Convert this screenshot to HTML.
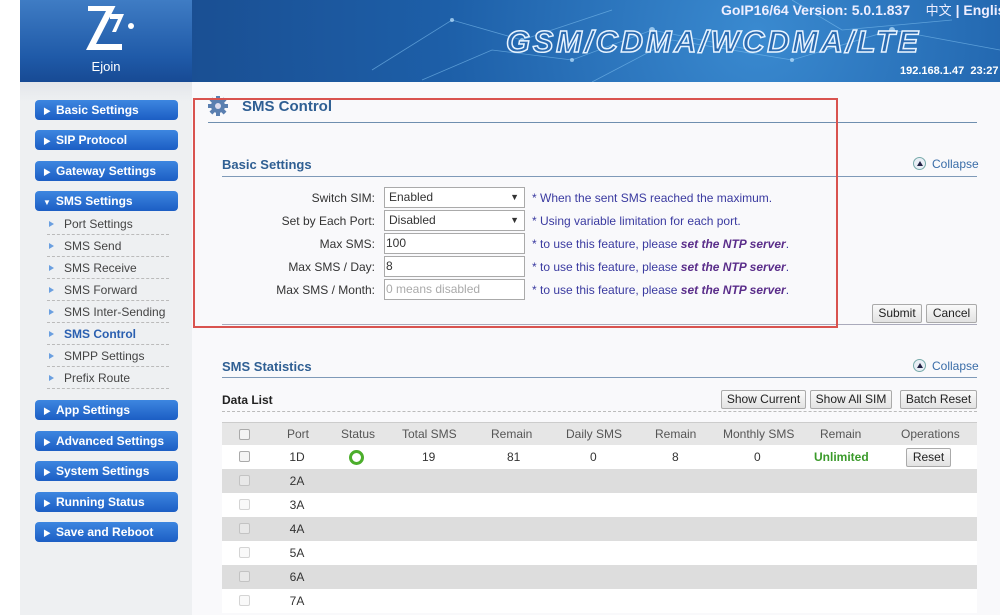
<!DOCTYPE html>
<html><head><meta charset="utf-8"><style>
*{margin:0;padding:0;box-sizing:border-box}
body{width:1000px;height:615px;overflow:hidden;background:#fff;font-family:"Liberation Sans","Noto Sans CJK SC",sans-serif;font-size:12px;color:#333;position:relative}
.abs{position:absolute}
#logo{left:20px;top:0;width:172px;height:82px;background:linear-gradient(#3f7cc4,#1f5aa8 70%,#174a94);color:#fff;text-align:center}
#banner{left:192px;top:0;width:808px;height:82px;background:radial-gradient(circle at 70% 40%,#3a8ad0,#1d5fa8 55%,#1a4f93);}
#side{left:20px;top:82px;width:172px;height:533px;background:linear-gradient(#e4e6ea,#eef0f2 20px,#eef0f2)}
#main{left:192px;top:82px;width:808px;height:533px;background:#f9f9fb}
.btn{position:absolute;left:35px;width:143px;height:20px;border-radius:4px;background:linear-gradient(#3d86e0,#1c5ec4);color:#fff;font-weight:bold;font-size:12px;line-height:20px;padding-left:8px}
.btn span{font-size:8px;margin-right:5px}
.sub{position:absolute;left:47px;width:122px;height:22px;border-bottom:1px dashed #bbb;line-height:22px;font-size:12px;color:#444;padding-left:17px}
.sub:before{content:"";position:absolute;left:2px;top:8px;border-left:5px solid #6a9fe0;border-top:3.5px solid transparent;border-bottom:3.5px solid transparent}
.lbl{position:absolute;text-align:right;width:150px;left:225px;font-size:12px;color:#333}
.inp{position:absolute;left:384px;width:141px;height:21px;border:1px solid #aaa;background:#fff;font-size:12px;line-height:19px;padding-left:4px}
.note{position:absolute;left:532px;color:#3a3aa0;font-size:12px}
.note i{color:#5a2d8a;font-weight:bold}
.b{position:absolute;height:19px;border:1px solid #aaa;border-radius:2px;background:linear-gradient(#fafafa,#e2e2e2);font-size:12px;line-height:17px;text-align:center;color:#222}
.h2{position:absolute;font-weight:bold;color:#2f5f93;font-size:13px}
.col{position:absolute;font-size:12px;color:#555;line-height:22px}
.row{position:absolute;left:222px;width:755px;height:24px}
.cb{position:absolute;left:17px;top:6px;width:11px;height:11px;border:1px solid #aaa;border-radius:2px;background:#f4f4f4}
.row .p{position:absolute;left:66px;width:18px;text-align:center;line-height:24px;color:#333}
.coll{position:absolute;color:#3a6da8;font-size:12px}
.coll b{display:inline-block;width:13px;height:13px;border:1px solid #7aa;border-radius:50%;background:#e8eef5;vertical-align:-2px;margin-right:6px;position:relative}
.coll b:after{content:"";position:absolute;left:2.5px;top:3px;border-bottom:5px solid #224;border-left:3.5px solid transparent;border-right:3.5px solid transparent}
</style></head><body>
<div id="logo" class="abs">
<svg class="abs" style="left:60px;top:6px" width="60" height="48" viewBox="0 0 60 48"><polygon points="8,5 36,5 16,44 42,44 42,50 6,50 26,11 8,11" fill="#fff" transform="translate(0,-6)"/><polygon points="30,8 44,8 36,26 32,26 38,13 30,13" fill="#fff"/><circle cx="51" cy="20" r="3" fill="#fff"/></svg>
<div style="position:absolute;left:0;width:172px;top:59px;font-size:13px">Ejoin</div>
</div>
<div id="banner" class="abs">
<svg class="abs" style="left:0;top:0" width="808" height="82"><g stroke="#7fc0f0" stroke-width="0.8" fill="none" opacity="0.6"><path d="M180 70 L260 20 L330 40 L420 10"/><path d="M230 80 L300 50 L380 60 L460 30 L560 50"/><path d="M400 82 L480 40 L600 60 L700 30 L808 50"/><path d="M600 0 L650 30 L760 20"/></g><g fill="#bfe4ff" opacity="0.7"><circle cx="260" cy="20" r="2"/><circle cx="330" cy="40" r="2"/><circle cx="460" cy="30" r="3"/><circle cx="600" cy="60" r="2"/><circle cx="700" cy="30" r="3"/><circle cx="380" cy="60" r="2"/></g></svg>
<div class="abs" style="left:529px;top:0px;color:#eef;font-weight:bold;font-size:14px;white-space:nowrap">GoIP16/64 Version: 5.0.1.837 &nbsp;&nbsp; <span style="font-weight:normal;font-size:13px">中文</span> | English</div>
<div class="abs" style="left:314px;top:24px;font-size:31px;font-weight:bold;font-style:italic;color:#2a6ab0;letter-spacing:2.6px;white-space:nowrap;-webkit-text-stroke:1.5px #e8f4ff">GSM/CDMA/WCDMA/LTE</div>
<div class="abs" style="left:708px;top:65px;color:#fff;font-weight:bold;font-size:11px;white-space:nowrap">192.168.1.47 &nbsp;23:27</div>
</div>
<div id="side" class="abs"></div>
<div id="main" class="abs"></div>
<div class="btn" style="top:100px"><span>▶</span>Basic Settings</div>
<div class="btn" style="top:130px"><span>▶</span>SIP Protocol</div>
<div class="btn" style="top:161px"><span>▶</span>Gateway Settings</div>
<div class="btn" style="top:191px"><span>▼</span>SMS Settings</div>
<div class="sub" style="top:213px">Port Settings</div>
<div class="sub" style="top:235px">SMS Send</div>
<div class="sub" style="top:257px">SMS Receive</div>
<div class="sub" style="top:279px">SMS Forward</div>
<div class="sub" style="top:301px">SMS Inter-Sending</div>
<div class="sub" style="top:323px;color:#2a5fb0;font-weight:bold">SMS Control</div>
<div class="sub" style="top:345px">SMPP Settings</div>
<div class="sub" style="top:367px">Prefix Route</div>
<div class="btn" style="top:400px"><span>▶</span>App Settings</div>
<div class="btn" style="top:431px"><span>▶</span>Advanced Settings</div>
<div class="btn" style="top:461px"><span>▶</span>System Settings</div>
<div class="btn" style="top:492px"><span>▶</span>Running Status</div>
<div class="btn" style="top:522px"><span>▶</span>Save and Reboot</div>

<svg class="abs" style="left:207px;top:96px" width="22" height="20" viewBox="0 0 22 20"><g fill="#5a7fb0"><circle cx="11" cy="10" r="7"/><rect x="9" y="0" width="4" height="20"/><rect x="1" y="8" width="20" height="4"/><rect x="9" y="0" width="4" height="20" transform="rotate(45 11 10)"/><rect x="9" y="0" width="4" height="20" transform="rotate(-45 11 10)"/></g><circle cx="11" cy="10" r="3" fill="#dde"/></svg>
<div class="abs" style="left:242px;top:98px;font-weight:bold;color:#2f5f93;font-size:15px">SMS Control</div>
<div class="abs" style="left:208px;top:122px;width:769px;height:1px;background:#6f8faf"></div>

<div class="h2" style="left:222px;top:157px">Basic Settings</div>
<div class="coll" style="left:913px;top:157px"><b></b>Collapse</div>
<div class="abs" style="left:222px;top:176px;width:755px;height:1px;background:#7f9ab8"></div>

<div class="lbl" style="top:191px">Switch SIM:</div>
<div class="inp" style="top:187px;width:141px">Enabled<span style="position:absolute;right:5px;font-size:9px">▼</span></div>
<div class="note" style="top:191px">* When the sent SMS reached the maximum.</div>
<div class="lbl" style="top:214px">Set by Each Port:</div>
<div class="inp" style="top:210px">Disabled<span style="position:absolute;right:5px;font-size:9px">▼</span></div>
<div class="note" style="top:214px">* Using variable limitation for each port.</div>
<div class="lbl" style="top:237px">Max SMS:</div>
<div class="inp" style="top:233px;padding-left:1px">100</div>
<div class="note" style="top:237px">* to use this feature, please <i>set the NTP server</i>.</div>
<div class="lbl" style="top:260px">Max SMS / Day:</div>
<div class="inp" style="top:256px;padding-left:1px">8</div>
<div class="note" style="top:260px">* to use this feature, please <i>set the NTP server</i>.</div>
<div class="lbl" style="top:283px">Max SMS / Month:</div>
<div class="inp" style="top:279px;padding-left:1px;color:#aaa">0 means disabled</div>
<div class="note" style="top:283px">* to use this feature, please <i>set the NTP server</i>.</div>
<div class="b" style="left:872px;top:304px;width:50px">Submit</div>
<div class="b" style="left:926px;top:304px;width:51px">Cancel</div>
<div class="abs" style="left:222px;top:324px;width:755px;height:1px;background:#aab"></div>

<div class="abs" style="left:193px;top:98px;width:645px;height:230px;border:2px solid #d9534f"></div>

<div class="h2" style="left:222px;top:359px">SMS Statistics</div>
<div class="coll" style="left:913px;top:359px"><b></b>Collapse</div>
<div class="abs" style="left:222px;top:377px;width:755px;height:1px;background:#7f9ab8"></div>
<div class="abs" style="left:222px;top:393px;font-weight:bold;color:#222">Data List</div>
<div class="b" style="left:721px;top:390px;width:85px">Show Current</div>
<div class="b" style="left:810px;top:390px;width:82px">Show All SIM</div>
<div class="b" style="left:900px;top:390px;width:77px">Batch Reset</div>
<div class="abs" style="left:222px;top:411px;width:755px;border-top:1px dashed #bbb"></div>

<div class="row" style="top:422px;background:#e6e6e6;height:23px;border-top:1px solid #ccc"><div class="cb"></div></div>
<div class="col" style="left:287px;top:423px">Port</div>
<div class="col" style="left:341px;top:423px">Status</div>
<div class="col" style="left:402px;top:423px">Total SMS</div>
<div class="col" style="left:491px;top:423px">Remain</div>
<div class="col" style="left:566px;top:423px">Daily SMS</div>
<div class="col" style="left:655px;top:423px">Remain</div>
<div class="col" style="left:723px;top:423px">Monthly SMS</div>
<div class="col" style="left:820px;top:423px">Remain</div>
<div class="col" style="left:901px;top:423px">Operations</div>

<div class="row" style="top:445px;background:#fff"><div class="cb"></div><div class="p">1D</div>
<div class="abs" style="left:127px;top:5px;width:15px;height:15px;border:3px solid #4cae2c;border-radius:50%"></div>
<div class="abs" style="left:200px;line-height:24px">19</div>
<div class="abs" style="left:285px;line-height:24px">81</div>
<div class="abs" style="left:368px;line-height:24px">0</div>
<div class="abs" style="left:450px;line-height:24px">8</div>
<div class="abs" style="left:532px;line-height:24px">0</div>
<div class="abs" style="left:592px;line-height:24px;color:#3a9a2a;font-weight:bold">Unlimited</div>
<div class="b" style="left:684px;top:3px;width:45px">Reset</div></div>
<div class="row" style="top:469px;background:#ddd"><div class="cb" style="opacity:.5"></div><div class="p">2A</div></div>
<div class="row" style="top:493px;background:#fff"><div class="cb" style="opacity:.5"></div><div class="p">3A</div></div>
<div class="row" style="top:517px;background:#ddd"><div class="cb" style="opacity:.5"></div><div class="p">4A</div></div>
<div class="row" style="top:541px;background:#fff"><div class="cb" style="opacity:.5"></div><div class="p">5A</div></div>
<div class="row" style="top:565px;background:#ddd"><div class="cb" style="opacity:.5"></div><div class="p">6A</div></div>
<div class="row" style="top:589px;background:#fff"><div class="cb" style="opacity:.5"></div><div class="p">7A</div></div>
</body></html>
